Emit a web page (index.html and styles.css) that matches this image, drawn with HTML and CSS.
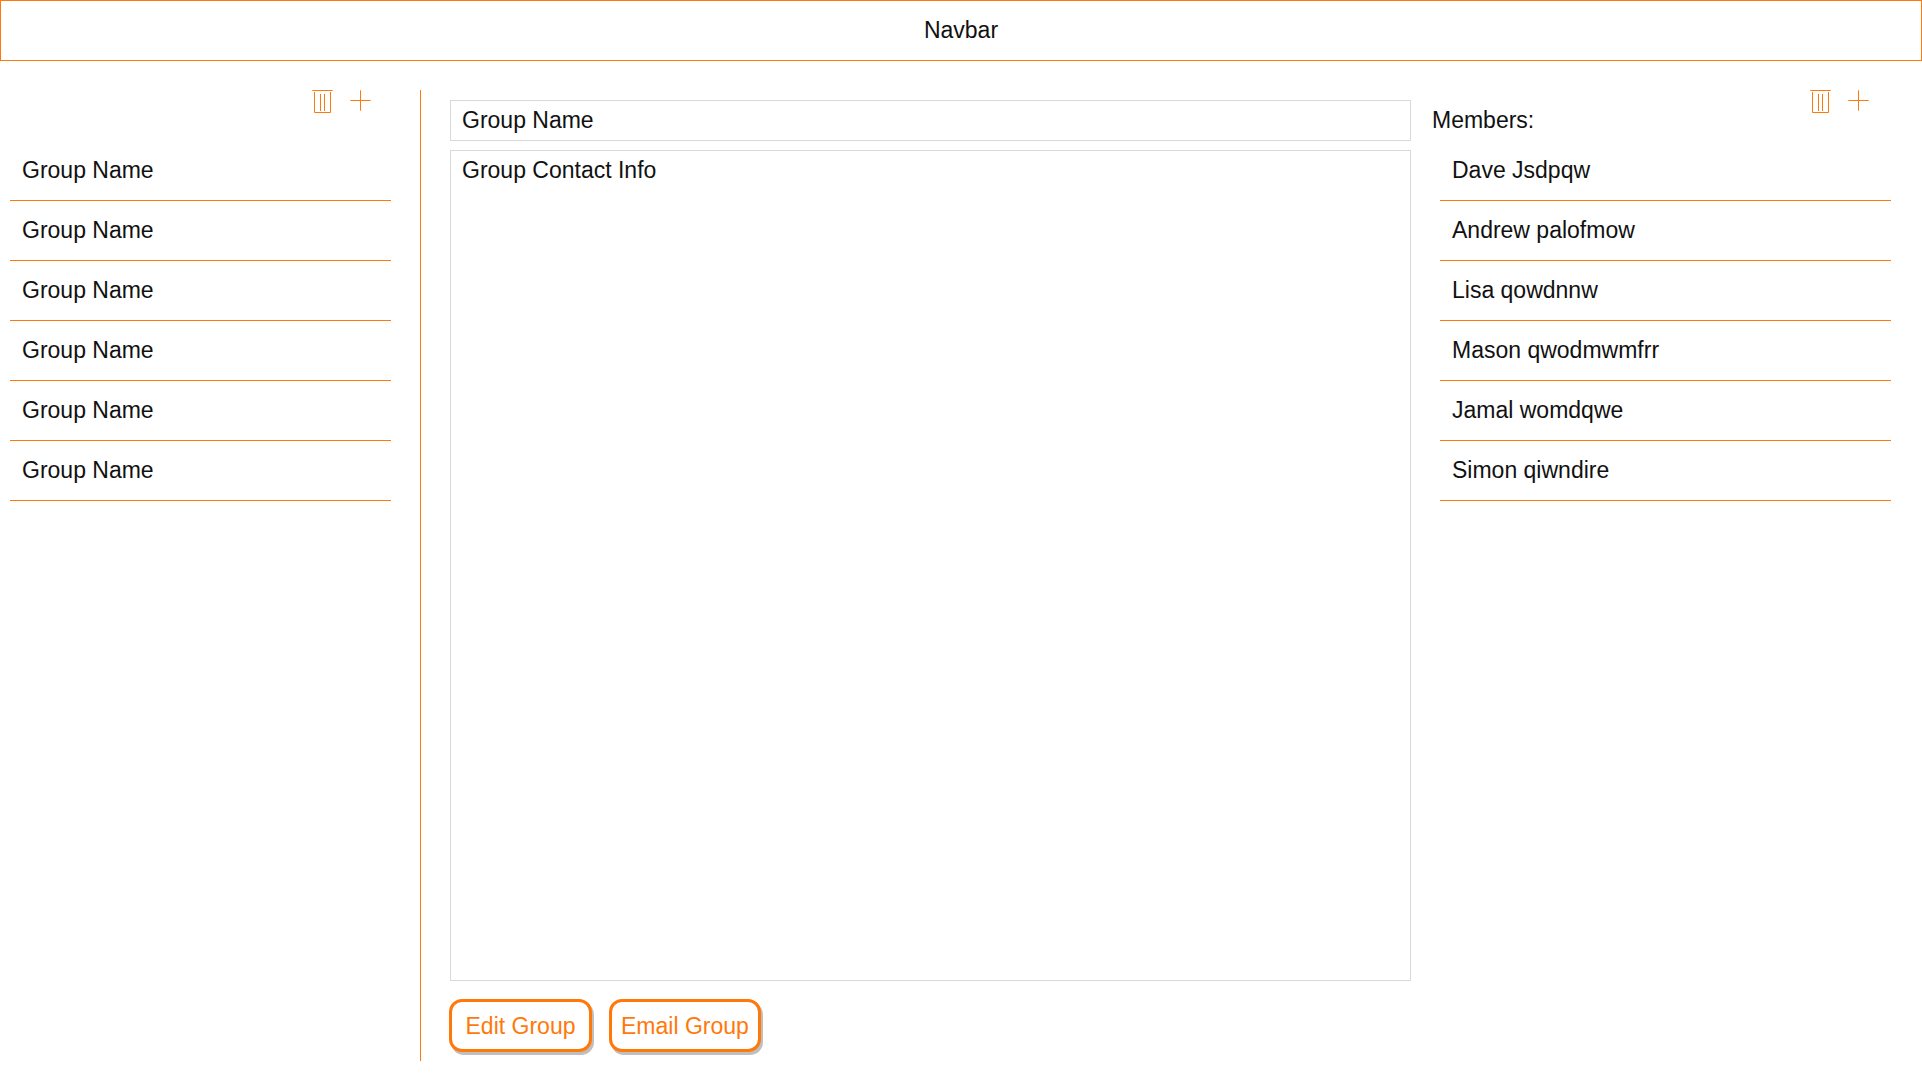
FILE: index.html
```html
<!DOCTYPE html>
<html lang="en">
<head>
  <meta charset="utf-8">
  <meta name="viewport" content="width=device-width, initial-scale=1">
  <title>Groups</title>
  <link rel="stylesheet" href="styles.css">
</head>
<body>
  <header class="navbar">Navbar</header>
  <div class="layout">
    <nav class="groups" aria-label="Groups">
      <div class="panel-head">
        <div class="tools">
          <button class="icon-button" type="button" aria-label="Delete group">
            <svg class="icon" viewBox="0 0 21 24" aria-hidden="true"><path d="M.3 .5H20.7M2.5 2V22.5H18.5V2M8.5 4V21M12.5 4V21"/></svg>
          </button>
          <button class="icon-button" type="button" aria-label="Add group">
            <svg class="icon" viewBox="0 0 21 24" aria-hidden="true"><path d="M.3 10.5H20.7M10.5 .3V20.7"/></svg>
          </button>
        </div>
      </div>
      <ul class="list">
        <li><a class="row" href="#">Group Name</a></li>
        <li><a class="row" href="#">Group Name</a></li>
        <li><a class="row" href="#">Group Name</a></li>
        <li><a class="row" href="#">Group Name</a></li>
        <li><a class="row" href="#">Group Name</a></li>
        <li><a class="row" href="#">Group Name</a></li>
      </ul>
    </nav>
    <main class="detail">
      <h1 class="box">Group Name</h1>
      <section class="box box-info">Group Contact Info</section>
      <div class="actions">
        <button class="button" type="button">Edit Group</button>
        <button class="button" type="button">Email Group</button>
      </div>
    </main>
    <aside class="members">
      <div class="panel-head">
        <h2 class="title">Members:</h2>
        <div class="tools">
          <button class="icon-button" type="button" aria-label="Delete member">
            <svg class="icon" viewBox="0 0 21 24" aria-hidden="true"><path d="M.3 .5H20.7M2.5 2V22.5H18.5V2M8.5 4V21M12.5 4V21"/></svg>
          </button>
          <button class="icon-button" type="button" aria-label="Add member">
            <svg class="icon" viewBox="0 0 21 24" aria-hidden="true"><path d="M.3 10.5H20.7M10.5 .3V20.7"/></svg>
          </button>
        </div>
      </div>
      <ul class="list">
        <li><a class="row" href="#">Dave Jsdpqw</a></li>
        <li><a class="row" href="#">Andrew palofmow</a></li>
        <li><a class="row" href="#">Lisa qowdnnw</a></li>
        <li><a class="row" href="#">Mason qwodmwmfrr</a></li>
        <li><a class="row" href="#">Jamal womdqwe</a></li>
        <li><a class="row" href="#">Simon qiwndire</a></li>
      </ul>
    </aside>
  </div>
</body>
</html>
```
FILE: styles.css
```css
:root {
  --accent: #ff780a;
  --line: #d9d9d9;
  --text: #111;
}

* {
  box-sizing: border-box;
}

body {
  display: flex;
  flex-direction: column;
  min-height: 100vh;
  margin: 0;
  background: #fff;
  color: var(--text);
  font: 23px/40px "Liberation Sans", Arial, sans-serif;
}

.navbar {
  padding: 9px 0 10px;
  border: 1px solid var(--accent);
  text-align: center;
}

.layout {
  display: grid;
  flex: 1;
  grid-template-columns: 421fr 990fr 511fr;
  padding: 29px 0 20px;
}

.groups {
  padding: 0 29px 0 10px;
  border-right: 1px solid var(--accent);
}

.members {
  padding: 0 31px 0 29px;
}

.panel-head {
  display: flex;
  height: 51px;
  padding-right: 20px;
}

.members .panel-head {
  margin-left: -8px;
  padding-right: 22px;
}

.title {
  margin: 0;
  padding-top: 10px;
  font: inherit;
}

.tools {
  display: flex;
  align-items: flex-start;
  gap: 17px;
  margin-left: auto;
}

.icon-button {
  padding: 0;
  border: 0;
  background: none;
  cursor: pointer;
}

.icon {
  display: block;
  width: 21px;
  height: 24px;
  fill: none;
  stroke: var(--accent);
}

.list {
  margin: 0;
  padding: 0;
  list-style: none;
}

.row {
  display: block;
  padding: 9px 12px 10px;
  border-bottom: 1px solid var(--accent);
  color: inherit;
  text-decoration: none;
}

.detail {
  display: flex;
  flex-direction: column;
  padding: 10px 0 9px 29px;
}

.box {
  margin: 0;
  padding: 0 11px;
  border: 1px solid var(--line);
  font: inherit;
  line-height: 39px;
}

.box-info {
  flex: 1;
  margin-top: 9px;
}

.actions {
  display: flex;
  gap: 17px;
  margin: 18px 0 0 -1px;
}

.button {
  min-width: 143px;
  height: 53px;
  padding: 0 9px;
  border: 3px solid var(--accent);
  border-radius: 13px;
  background: #fff;
  box-shadow: 2px 3px 0 #bfbfbf;
  color: var(--accent);
  font: inherit;
  cursor: pointer;
}
```
